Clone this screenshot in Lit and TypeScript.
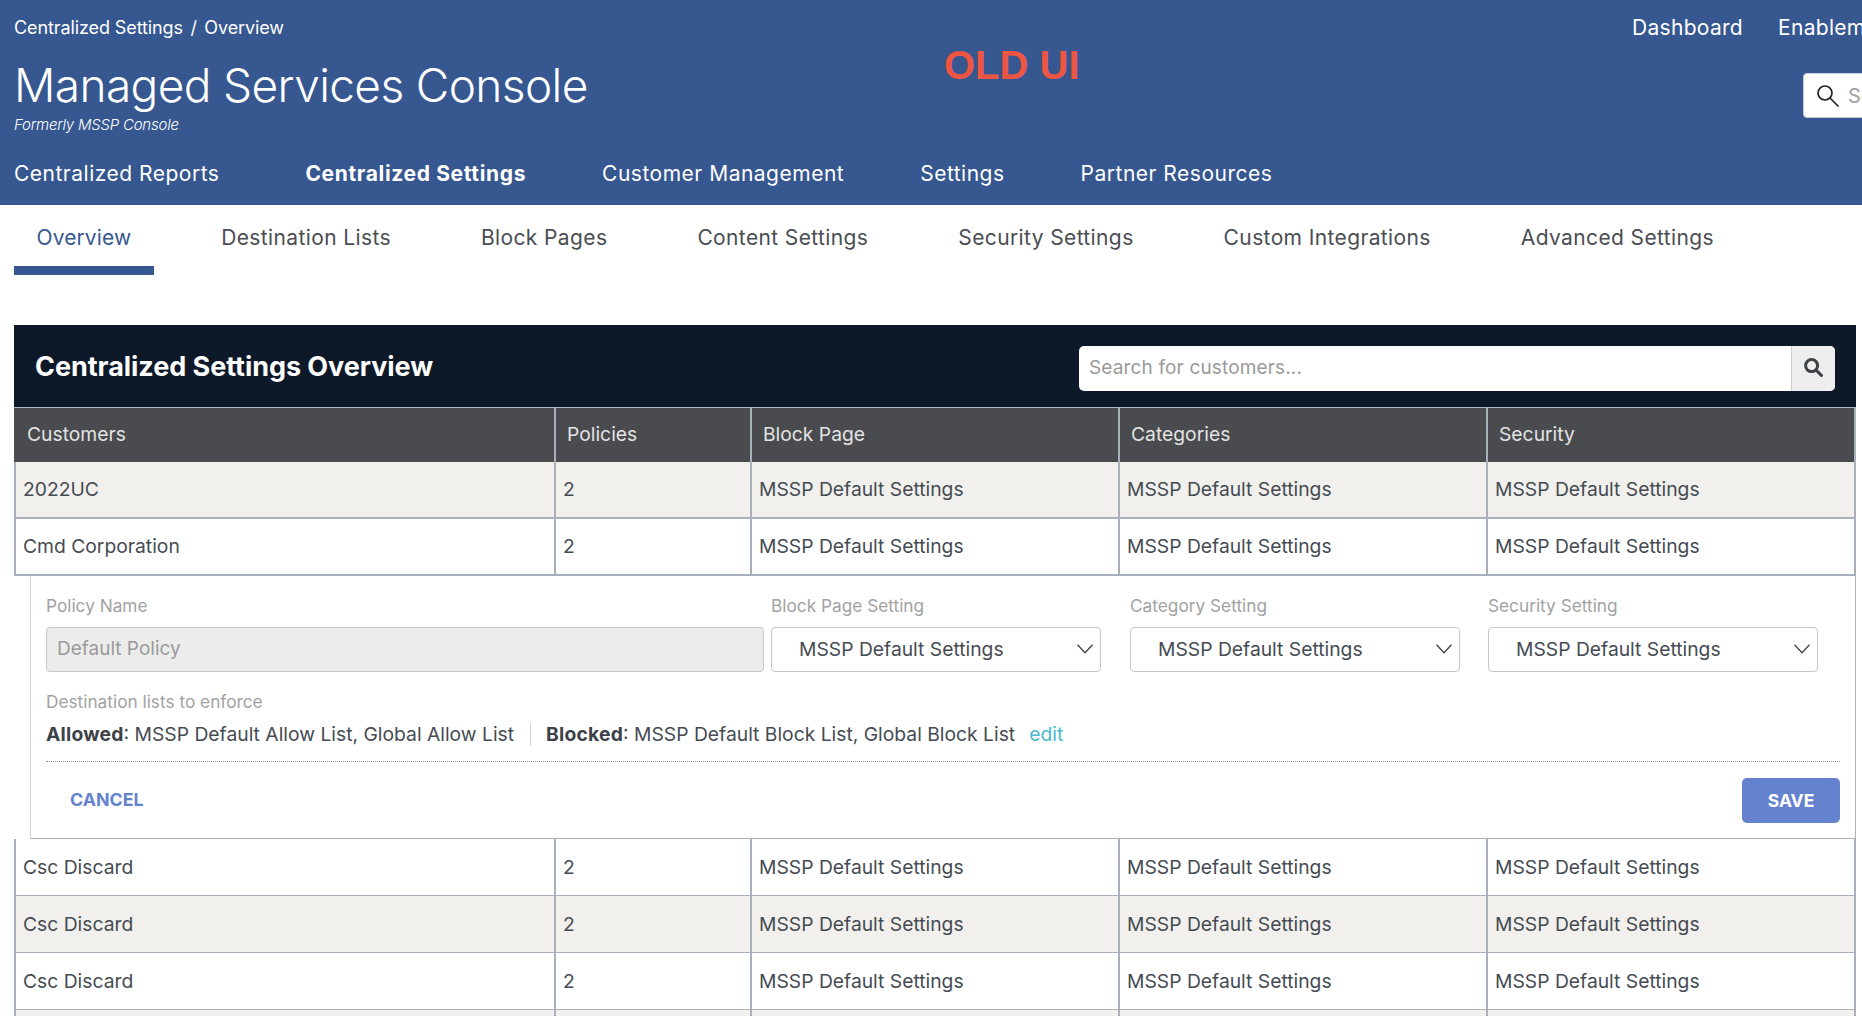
import { LitElement, html, css } from "lit";
import { customElement } from "lit/decorators.js";

const TOP_NAV = ["Centralized Reports", "Centralized Settings", "Customer Management", "Settings", "Partner Resources"];
const TABS = ["Overview", "Destination Lists", "Block Pages", "Content Settings", "Security Settings", "Custom Integrations", "Advanced Settings"];
const COLS = ["Customers", "Policies", "Block Page", "Categories", "Security"];
const D = "MSSP Default Settings";

@customElement("app-root")
export class AppRoot extends LitElement {
  static styles = css`
    :host { display: block; width: 100%; height: 1016px; overflow: hidden; background: #fff; font-family: Inter, "Liberation Sans", sans-serif; color: #454b52; }
    * { box-sizing: border-box; }
    .masthead { position: relative; height: 205px; background: #36578f; color: #fff; padding: 0 0 0 14px; overflow: hidden; }
    .mast-top { display: flex; justify-content: space-between; height: 149px; }
    .crumbs { font-size: 18px; line-height: 20px; padding-top: 18px; letter-spacing: -0.1px; display: flex; gap: 7.5px; }
    .title { font-size: 46px; font-weight: 300; line-height: 58px; margin-top: 18px; letter-spacing: -0.62px; }
    .formerly { font-size: 15px; font-style: italic; font-weight: 300; line-height: 18px; margin-top: 2px; letter-spacing: -0.22px; }
    .mast-right { width: 230px; flex: none; overflow: hidden; }
    .utility { display: flex; gap: 35px; font-size: 21px; line-height: 24px; padding-top: 16px; white-space: nowrap; letter-spacing: 0.3px; }
    .mini-search { width: 120px; height: 45px; margin: 33px 0 0 171px; background: #fff; border: 1px solid #c8ccd4; border-radius: 4px; display: flex; align-items: center; padding-left: 13px; gap: 9px; color: #a0a0a0; font-size: 20px; }
    .mini-search svg { flex: none; margin-top: 1px; }
    .old { position: absolute; left: 944px; top: 42px; font-family: "Liberation Sans", Arial, sans-serif; font-weight: 700; font-size: 40px; line-height: 46px; color: #ee5644; }
    .nav { display: flex; gap: 76px; font-size: 21px; line-height: 24px; padding-top: 13px; letter-spacing: 0.5px; }
    .nav .on { font-weight: 700; margin-left: 10px; letter-spacing: 0.65px; }
    .tabs { display: flex; gap: 45px; height: 70px; padding-left: 14px; margin-bottom: 50px; }
    .tab { padding: 21px 22.5px 0; height: 70px; font-size: 21px; line-height: 24px; color: #4a4d52; letter-spacing: 0.38px; white-space: nowrap; }
    .tab.on { color: #36578f; border-bottom: 9px solid #36578f; letter-spacing: 0.1px; }
    .panel { margin: 0 6px 0 14px; }
    .panel-head { height: 82px; background: #0d1829; display: flex; align-items: center; justify-content: space-between; padding: 0 21px 0 21px; }
    .panel-head h2 { margin: 0; color: #fff; font-size: 27px; font-weight: 700; letter-spacing: -0.05px; }
    .search { width: 756px; height: 45px; margin-top: 4px; display: flex; background: #fff; border-radius: 5px; overflow: hidden; }
    .search span { flex: 1; font-size: 19px; line-height: 43px; padding-left: 10px; color: #9a9a9a; letter-spacing: 0.15px; }
    .search button { all: unset; width: 42px; background: #eeeeee; border-left: 1px solid #cfcfcf; display: flex; align-items: center; justify-content: center; padding: 0 1px 2px 0; }
    .row { display: grid; grid-template-columns: 542px 196px 368px 368px 368px; height: 57px; border-bottom: 1px solid #a9afbd; }
    .row.thick { border-bottom-width: 2px; }
    .row.zebra { background: #f1f0ed; }
    .row > div { display: flex; align-items: center; padding-left: 7px; font-size: 19.3px; border-right: 2px solid #a9afbd; white-space: nowrap; }
    .row > div:first-child { border-left: 2px solid #a9afbd; }
    .row.thick > div { padding-bottom: 1px; }
    .row.head { height: 55px; background: #4a4b4f; color: #e3e3e3; border-top: 1px solid #b4b8c2; border-bottom: 0; }
    .row.head > div { padding: 0 0 2px 11px; border-left: 0; }
    .row.head > div:first-child { padding-left: 13px; }
    .detail { height: 263px; margin-left: 16px; border-left: 1px solid #cfd3da; border-right: 1px solid #a9afbd; border-bottom: 1px solid #a9afbd; padding: 0 15px; }
    .fields { display: flex; padding-top: 20px; }
    .f { flex: none; width: 330px; }
    .f.name { width: 718px; }
    .f.s1 { margin-left: 7px; }
    .f.s2 { margin-left: 29px; }
    .f.s3 { margin-left: 28px; }
    .lbl { font-size: 17.25px; line-height: 20px; color: #a2a2a2; }
    .ctl { height: 45px; margin-top: 11px; border: 1px solid #c4c7cc; border-radius: 4px; display: flex; align-items: center; font-size: 19.3px; }
    .ctl.ro { background: #ececec; color: #9a9a9a; padding: 0 0 2px 10px; font-size: 19px; }
    .ctl.sel { justify-content: space-between; padding: 0 7px 1px 27px; color: #454b52; }
    .lists-lbl { padding-top: 20px; }
    .lists { display: flex; align-items: center; height: 24px; margin-top: 10px; font-size: 19.3px; white-space: nowrap; }
    .lists .sep { width: 1px; height: 23px; background: #cfd3da; margin: 0 15px 0 16px; }
    .lists b { color: #3d4248; letter-spacing: 0.2px; }
    .lists a { color: #4ab8ce; margin-left: 14px; }
    .rule { border-top: 1px dotted #8e8e8e; margin-top: 15px; }
    .actions { display: flex; justify-content: space-between; align-items: center; padding: 16px 0 0 24px; }
    .cancel { color: #6482ce; font-weight: 700; font-size: 17.8px; margin-top: -2px; }
    .save { width: 98px; height: 45px; background: #6482ce; color: #fff; font-weight: 700; font-size: 17.5px; border-radius: 5px; display: flex; align-items: center; justify-content: center; padding-bottom: 1px; }
  `;

  private row(name: string, cls = "") {
    return html`<div class="row ${cls}"><div>${name}</div><div>2</div><div>${D}</div><div>${D}</div><div>${D}</div></div>`;
  }

  private select() {
    return html`<div class="ctl sel"><span>${D}</span><svg width="16" height="10" viewBox="0 0 16 10" fill="none" stroke="#3f444a" stroke-width="1.3"><path d="M0.5 0.7L8 8.8L15.5 0.7"/></svg></div>`;
  }

  render() {
    return html`
      <header class="masthead">
        <div class="mast-top">
          <div>
            <div class="crumbs"><span>Centralized Settings</span><span>/</span><span>Overview</span></div>
            <div class="title">Managed Services Console</div>
            <div class="formerly">Formerly MSSP Console</div>
          </div>
          <div class="mast-right">
            <div class="utility"><span>Dashboard</span><span>Enablement</span></div>
            <div class="mini-search">
              <svg width="22" height="22" viewBox="0 0 22 22" fill="none" stroke="#222" stroke-width="1.7" stroke-linecap="round"><circle cx="8" cy="8" r="7"/><path d="M13 13L21 21"/></svg>
              <span>Search</span>
            </div>
          </div>
        </div>
        <div class="old">OLD UI</div>
        <nav class="nav">${TOP_NAV.map((n, i) => html`<span class="${i === 1 ? "on" : ""}">${n}</span>`)}</nav>
      </header>
      <div class="tabs">${TABS.map((t, i) => html`<div class="tab ${i === 0 ? "on" : ""}">${t}</div>`)}</div>
      <section class="panel">
        <div class="panel-head">
          <h2>Centralized Settings Overview</h2>
          <div class="search">
            <span>Search for customers...</span>
            <button aria-label="Search"><svg width="19" height="19" viewBox="0 0 19 19" fill="none" stroke="#3f4347" stroke-width="3" stroke-linecap="round"><circle cx="7.6" cy="7.6" r="6"/><path d="M12.4 12.4L17.4 17.4"/></svg></button>
          </div>
        </div>
        <div class="row head">${COLS.map((c) => html`<div>${c}</div>`)}</div>
        ${this.row("2022UC", "zebra thick")}
        ${this.row("Cmd Corporation", "thick")}
        <div class="detail">
          <div class="fields">
            <div class="f name"><div class="lbl">Policy Name</div><div class="ctl ro">Default Policy</div></div>
            <div class="f s1"><div class="lbl">Block Page Setting</div>${this.select()}</div>
            <div class="f s2"><div class="lbl">Category Setting</div>${this.select()}</div>
            <div class="f s3"><div class="lbl">Security Setting</div>${this.select()}</div>
          </div>
          <div class="lbl lists-lbl">Destination lists to enforce</div>
          <div class="lists">
            <span><b>Allowed</b>: MSSP Default Allow List, Global Allow List</span>
            <span class="sep"></span>
            <span><b>Blocked</b>: MSSP Default Block List, Global Block List</span>
            <a>edit</a>
          </div>
          <div class="rule"></div>
          <div class="actions"><span class="cancel">CANCEL</span><span class="save">SAVE</span></div>
        </div>
        ${this.row("Csc Discard")}
        ${this.row("Csc Discard", "zebra")}
        ${this.row("Csc Discard")}
        <div class="row zebra"><div></div><div></div><div></div><div></div><div></div></div>
      </section>
    `;
  }
}
